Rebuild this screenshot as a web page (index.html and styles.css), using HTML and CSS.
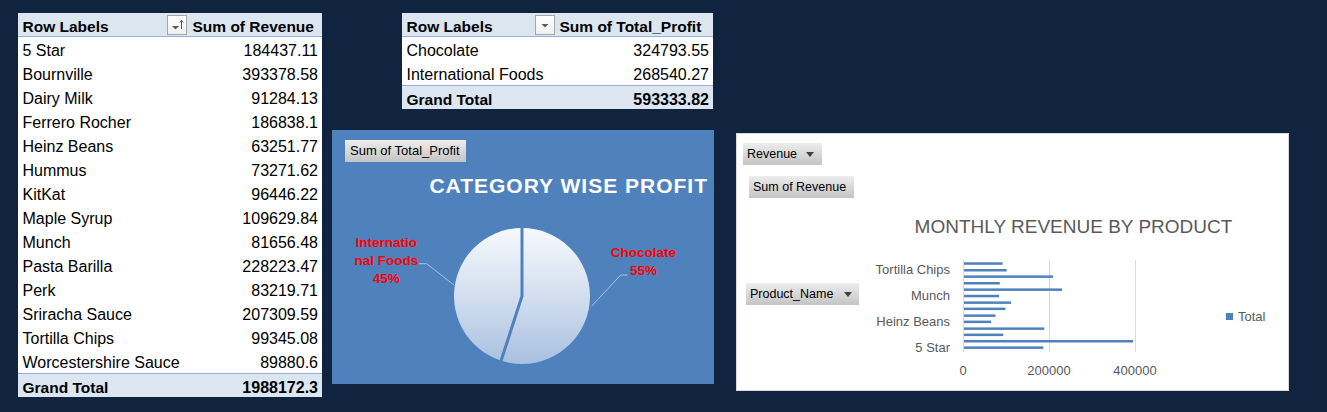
FILE: index.html
```html
<!DOCTYPE html>
<html lang="en">
<head>
<meta charset="utf-8">
<title>Sales Dashboard</title>
<link rel="stylesheet" href="styles.css">
</head>
<body>
<div class="page">
  <div class="pivot pivot-rev">
    <div class="row head">
      <div class="lbl">Row Labels
        <span class="filter-btn">
          <svg width="18" height="18" viewBox="0 0 18 18"><path d="M4 10h7l-3.5 3.5z" fill="#595959"/><path d="M13.5 13V4.5M11.8 6.5l1.7-2.2 1.7 2.2" stroke="#595959" stroke-width="1" fill="none"/></svg>
        </span>
      </div>
      <div class="hval">Sum of Revenue</div>
    </div>
    <div class="row"><div class="lbl">5 Star</div><div class="val">184437.11</div></div>
    <div class="row"><div class="lbl">Bournville</div><div class="val">393378.58</div></div>
    <div class="row"><div class="lbl">Dairy Milk</div><div class="val">91284.13</div></div>
    <div class="row"><div class="lbl">Ferrero Rocher</div><div class="val">186838.1</div></div>
    <div class="row"><div class="lbl">Heinz Beans</div><div class="val">63251.77</div></div>
    <div class="row"><div class="lbl">Hummus</div><div class="val">73271.62</div></div>
    <div class="row"><div class="lbl">KitKat</div><div class="val">96446.22</div></div>
    <div class="row"><div class="lbl">Maple Syrup</div><div class="val">109629.84</div></div>
    <div class="row"><div class="lbl">Munch</div><div class="val">81656.48</div></div>
    <div class="row"><div class="lbl">Pasta Barilla</div><div class="val">228223.47</div></div>
    <div class="row"><div class="lbl">Perk</div><div class="val">83219.71</div></div>
    <div class="row"><div class="lbl">Sriracha Sauce</div><div class="val">207309.59</div></div>
    <div class="row"><div class="lbl">Tortilla Chips</div><div class="val">99345.08</div></div>
    <div class="row"><div class="lbl">Worcestershire Sauce</div><div class="val">89880.6</div></div>
    <div class="row total"><div class="lbl">Grand Total</div><div class="val">1988172.3</div></div>
  </div>

  <div class="mid">
    <div class="pivot pivot-profit">
      <div class="row head">
        <div class="lbl">Row Labels
          <span class="filter-btn">
            <svg width="18" height="18" viewBox="0 0 18 18"><path d="M5.5 8h7L9 11.5z" fill="#595959"/></svg>
          </span>
        </div>
        <div class="hval">Sum of Total_Profit</div>
      </div>
      <div class="row"><div class="lbl">Chocolate</div><div class="val">324793.55</div></div>
      <div class="row"><div class="lbl">International Foods</div><div class="val">268540.27</div></div>
      <div class="row total"><div class="lbl">Grand Total</div><div class="val">593333.82</div></div>
    </div>

    <div class="pie-panel">
      <div class="field-btn pie-btn">Sum of Total_Profit</div>
      <div class="pie-title">CATEGORY WISE PROFIT</div>
      <svg class="pie-svg" width="382" height="185" viewBox="0 69 382 185">
        <defs>
          <linearGradient id="pieGrad" x1="0" y1="0" x2="0" y2="1">
            <stop offset="0" stop-color="#f6f9fd"/>
            <stop offset="0.55" stop-color="#cfdcee"/>
            <stop offset="1" stop-color="#a9c0df"/>
          </linearGradient>
        </defs>
        <circle cx="190" cy="166" r="68" fill="url(#pieGrad)"/>
        <path d="M190 97V166L169 231" stroke="#4f81bd" stroke-width="3" fill="none"/>
        <path d="M87 133.7H94.7L122 155" stroke="#a9c0df" stroke-width="1" fill="none"/>
        <path d="M259.7 176L288.7 145H295.7" stroke="#a9c0df" stroke-width="1" fill="none"/>
        <g class="pie-label">
          <text x="54.3" y="116.5">Internatio</text>
          <text x="54.3" y="135">nal Foods</text>
          <text x="54.3" y="153">45%</text>
          <text x="311.5" y="126.5">Chocolate</text>
          <text x="311.5" y="144.8">55%</text>
        </g>
      </svg>
    </div>
  </div>

  <div class="bar-panel">
    <div class="bar-fields">
      <div class="field-btn drop btn-revenue">Revenue <span class="caret"></span></div>
      <div class="field-btn btn-sum">Sum of Revenue</div>
      <div class="field-btn drop btn-product">Product_Name <span class="caret"></span></div>
    </div>
    <svg class="bar-svg" width="422" height="256" viewBox="130 1 422 256">
      <text class="bar-title" x="337.5" y="100">MONTHLY REVENUE BY PRODUCT</text>
      <g stroke="#d9d9d9" stroke-width="1">
        <line x1="227.5" y1="127" x2="227.5" y2="219"/>
        <line x1="313.5" y1="127" x2="313.5" y2="219"/>
        <line x1="399.5" y1="127" x2="399.5" y2="219"/>
      </g>
      <g fill="#4f81bd">
        <rect x="228" y="129.3" width="38.6" height="2.5"/>
        <rect x="228" y="136" width="42.7" height="2.5"/>
        <rect x="228" y="142.4" width="89.1" height="2.5"/>
        <rect x="228" y="149" width="35.8" height="2.5"/>
        <rect x="228" y="155.4" width="98.1" height="2.5"/>
        <rect x="228" y="161.8" width="35.1" height="2.5"/>
        <rect x="228" y="168.4" width="47.1" height="2.5"/>
        <rect x="228" y="174.6" width="41.5" height="2.5"/>
        <rect x="228" y="181.4" width="31.5" height="2.5"/>
        <rect x="228" y="187.6" width="27.2" height="2.5"/>
        <rect x="228" y="194.4" width="80.3" height="2.5"/>
        <rect x="228" y="200.6" width="39.3" height="2.5"/>
        <rect x="228" y="207" width="169.2" height="2.5"/>
        <rect x="228" y="213.4" width="79.3" height="2.5"/>
      </g>
      <g class="cat-label">
        <text x="214" y="140.5">Tortilla Chips</text>
        <text x="214" y="166.5">Munch</text>
        <text x="214" y="192.5">Heinz Beans</text>
        <text x="214" y="218.5">5 Star</text>
      </g>
      <g class="axis-label">
        <text x="227" y="241.5">0</text>
        <text x="313" y="241.5">200000</text>
        <text x="399" y="241.5">400000</text>
      </g>
      <rect x="490" y="180" width="7" height="7" fill="#4f81bd"/>
      <text class="legend-text" x="502" y="187.7">Total</text>
    </svg>
  </div>
</div>
</body>
</html>
```

FILE: styles.css
```css
html, body {
  margin: 0;
  padding: 0;
  overflow: hidden;
}

body {
  width: 1327px;
  height: 412px;
  background: #10233f;
  font-family: "Liberation Sans", Arial, sans-serif;
  color: #000;
}

.page {
  display: flex;
  align-items: flex-start;
  padding: 13px 0 0 18px;
}

/* ---------- pivot tables ---------- */
.pivot {
  display: flex;
  flex-direction: column;
  background: #fff;
  font-size: 16px;
}

.pivot-rev { width: 304px; }
.pivot-profit { width: 311px; margin-left: 70px; }

.row {
  display: flex;
  align-items: center;
  height: 24px;
  padding-top: 4px;
  box-sizing: border-box;
  white-space: nowrap;
}

.row .lbl {
  display: flex;
  align-items: center;
  justify-content: space-between;
  box-sizing: border-box;
  padding-left: 4.5px;
  height: 100%;
}

.pivot-rev .lbl { width: 170px; }
.pivot-profit .lbl { width: 153px; }

.row .val {
  flex: 1;
  text-align: right;
  padding-right: 4px;
}

.row.head {
  background: #dce6f1;
  border-bottom: 1px solid #95b3d7;
  font-weight: bold;
  font-size: 15.5px;
}

.row .hval {
  flex: 1;
  padding-left: 4.5px;
}

.row.total {
  background: #dce6f1;
  border-top: 1px solid #95b3d7;
  font-weight: bold;
  font-size: 15.5px;
}

.row.total .val { font-size: 16px; }

.filter-btn {
  display: flex;
  align-items: center;
  justify-content: center;
  width: 20px;
  height: 20px;
  box-sizing: border-box;
  margin: -3px 1px 0 0;
  border: 1px solid #a6a6a6;
  background: linear-gradient(#ffffff, #eef0f3);
}

.pivot-profit .filter-btn { margin-right: 0; }

/* ---------- middle column ---------- */
.mid {
  display: flex;
  flex-direction: column;
  align-items: flex-start;
  margin-left: 10px;
}

.pie-panel {
  display: flex;
  flex-direction: column;
  align-items: flex-start;
  width: 382px;
  height: 254px;
  margin-top: 21px;
  background: #4f81bd;
  overflow: hidden;
}

.field-btn {
  display: flex;
  align-items: center;
  height: 22px;
  line-height: 22px;
  font-size: 12.5px;
  color: #000;
  background: linear-gradient(#ededed, #c4c4c4);
  white-space: nowrap;
  box-sizing: border-box;
}

.pie-btn {
  margin: 10px 0 0 13px;
  padding: 0 6px 0 5px;
  font-size: 13px;
}

.pie-title {
  align-self: flex-end;
  margin: 11px 6px 0 0;
  line-height: 26px;
  font-size: 21px;
  font-weight: bold;
  letter-spacing: 1px;
  color: #fff;
}

.pie-svg { display: block; }

.pie-label text {
  fill: #ff0000;
  font-family: "Liberation Sans", Arial, sans-serif;
  font-weight: bold;
  font-size: 13.5px;
  text-anchor: middle;
}

/* ---------- bar chart ---------- */
.bar-panel {
  display: flex;
  width: 553px;
  height: 258px;
  margin: 120px 0 0 22px;
  box-sizing: border-box;
  border: 1px solid #d9d9d9;
  background: #fff;
}

.bar-fields {
  display: flex;
  flex-direction: column;
  align-items: flex-start;
  width: 129px;
  flex: none;
}

.drop { padding: 0 8px 0 4px; }

.caret {
  width: 0;
  height: 0;
  margin-left: 9px;
  border-left: 4px solid transparent;
  border-right: 4px solid transparent;
  border-top: 5px solid #404040;
}

.btn-revenue { margin: 9px 0 0 6px; }
.btn-sum { margin: 11px 0 0 12px; padding: 0 8px 0 4px; }
.btn-product { margin: 85px 0 0 9px; padding-right: 7px; }
.btn-product .caret { margin-left: 11px; }

.bar-svg { display: block; }

.bar-svg text {
  font-family: "Liberation Sans", Arial, sans-serif;
  fill: #595959;
}

.bar-title {
  font-size: 19px;
  text-anchor: middle;
}

.cat-label text {
  font-size: 13px;
  text-anchor: end;
}

.axis-label text {
  font-size: 13px;
  text-anchor: middle;
}

.legend-text { font-size: 13px; }
```
